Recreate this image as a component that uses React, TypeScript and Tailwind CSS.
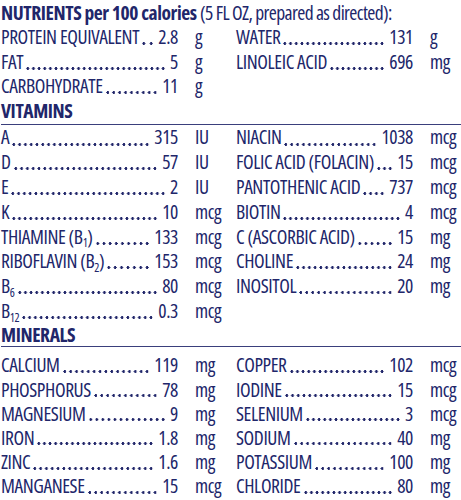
import type { ReactNode } from 'react';

type Item = { label: ReactNode; value: string; unit: string } | null;

const B = (n: string) => (
  <>
    B<sub className="bottom-[-0.3em] text-[12px]">{n}</sub>
  </>
);

const general: [Item, Item][] = [
  [{ label: 'PROTEIN EQUIVALENT', value: '2.8', unit: 'g' }, { label: 'WATER', value: '131', unit: 'g' }],
  [{ label: 'FAT', value: '5', unit: 'g' }, { label: 'LINOLEIC ACID', value: '696', unit: 'mg' }],
  [{ label: 'CARBOHYDRATE', value: '11', unit: 'g' }, null],
];

const vitamins: [Item, Item][] = [
  [{ label: 'A', value: '315', unit: 'IU' }, { label: 'NIACIN', value: '1038', unit: 'mcg' }],
  [{ label: 'D', value: '57', unit: 'IU' }, { label: 'FOLIC ACID (FOLACIN)', value: '15', unit: 'mcg' }],
  [{ label: 'E', value: '2', unit: 'IU' }, { label: 'PANTOTHENIC ACID', value: '737', unit: 'mcg' }],
  [{ label: 'K', value: '10', unit: 'mcg' }, { label: 'BIOTIN', value: '4', unit: 'mcg' }],
  [{ label: <>THIAMINE ({B('1')})</>, value: '133', unit: 'mcg' }, { label: 'C (ASCORBIC ACID)', value: '15', unit: 'mg' }],
  [{ label: <>RIBOFLAVIN ({B('2')})</>, value: '153', unit: 'mcg' }, { label: 'CHOLINE', value: '24', unit: 'mg' }],
  [{ label: B('6'), value: '80', unit: 'mcg' }, { label: 'INOSITOL', value: '20', unit: 'mg' }],
  [{ label: B('12'), value: '0.3', unit: 'mcg' }, null],
];

const minerals: [Item, Item][] = [
  [{ label: 'CALCIUM', value: '119', unit: 'mg' }, { label: 'COPPER', value: '102', unit: 'mcg' }],
  [{ label: 'PHOSPHORUS', value: '78', unit: 'mg' }, { label: 'IODINE', value: '15', unit: 'mcg' }],
  [{ label: 'MAGNESIUM', value: '9', unit: 'mg' }, { label: 'SELENIUM', value: '3', unit: 'mcg' }],
  [{ label: 'IRON', value: '1.8', unit: 'mg' }, { label: 'SODIUM', value: '40', unit: 'mg' }],
  [{ label: 'ZINC', value: '1.6', unit: 'mg' }, { label: 'POTASSIUM', value: '100', unit: 'mg' }],
  [{ label: 'MANGANESE', value: '15', unit: 'mcg' }, { label: 'CHLORIDE', value: '80', unit: 'mg' }],
];

function Entry({ item }: { item: Item }) {
  if (!item) return <div />;
  return (
    <div className="flex">
      <div className="flex w-[177px]">
        <span className="whitespace-nowrap">{item.label}</span>
        <span className="ml-[2px] mr-[4px] flex-1 bg-[image:radial-gradient(circle,#21266a_1.25px,transparent_1.65px)] bg-size-[5.6px_3.4px] bg-position-[right_bottom_4.4px] [background-repeat:space_no-repeat]" />
        <span className="whitespace-nowrap">{item.value}</span>
      </div>
      <span className="pl-[17px]">{item.unit}</span>
    </div>
  );
}

function Rows({ rows, rowH }: { rows: [Item, Item][]; rowH: string }) {
  return (
    <div>
      {rows.map((r, i) => (
        <div key={i} className={`grid grid-cols-[235px_1fr] ${rowH}`}>
          <Entry item={r[0]} />
          <Entry item={r[1]} />
        </div>
      ))}
    </div>
  );
}

export default function App() {
  return (
    <div className="min-h-[500px] bg-white pl-[1px] pt-[1px] font-['Open_Sans',sans-serif] text-[19.5px] leading-[24.8px] font-[520] font-stretch-condensed tracking-[-0.4px] text-[#21266a]">
      <div className="h-[23.8px] whitespace-nowrap">
        <span className="font-bold">NUTRIENTS per 100 calories</span>{' '}
        <span className="font-normal tracking-[-0.6px]">(5 FL OZ, prepared as directed):</span>
      </div>
      <Rows rows={general} rowH="h-[24.8px]" />

      <div className="h-[24.8px] font-bold">VITAMINS</div>
      <div className="h-[1.5px] bg-[#3a3f7c]" />
      <Rows rows={vitamins} rowH="h-[24.8px]" />

      <div className="h-[22px] leading-[22px] font-bold">MINERALS</div>
      <div className="h-[1.5px] bg-[#3a3f7c]" />
      <div className="pt-[6px]">
        <Rows rows={minerals} rowH="h-[24.2px] leading-[24.2px]" />
      </div>
    </div>
  );
}
